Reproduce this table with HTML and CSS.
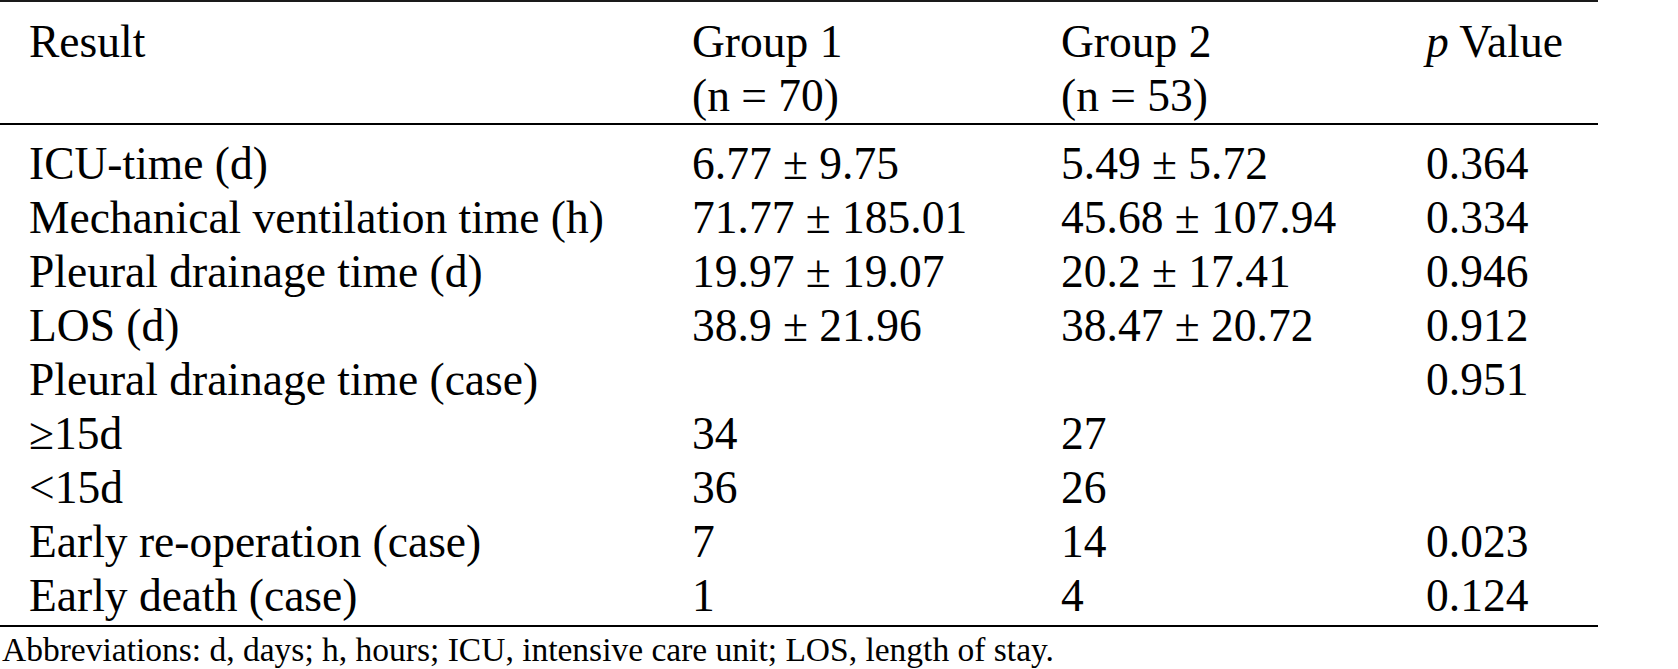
FILE: index.html
```html
<!DOCTYPE html>
<html lang="en">
<head>
<meta charset="utf-8">
<title>Results</title>
<link rel="stylesheet" href="styles.css">
</head>
<body>
<div class="wrap">
  <div class="table">
    <div class="row head">
      <div class="cell">Result</div>
      <div class="cell">Group 1<br>(n = 70)</div>
      <div class="cell">Group 2<br>(n = 53)</div>
      <div class="cell"><i>p</i> Value</div>
    </div>
    <div class="body">
      <div class="row"><div class="cell">ICU-time (d)</div><div class="cell">6.77 ± 9.75</div><div class="cell">5.49 ± 5.72</div><div class="cell">0.364</div></div>
      <div class="row"><div class="cell">Mechanical ventilation time (h)</div><div class="cell">71.77 ± 185.01</div><div class="cell">45.68 ± 107.94</div><div class="cell">0.334</div></div>
      <div class="row"><div class="cell">Pleural drainage time (d)</div><div class="cell">19.97 ± 19.07</div><div class="cell">20.2 ± 17.41</div><div class="cell">0.946</div></div>
      <div class="row"><div class="cell">LOS (d)</div><div class="cell">38.9 ± 21.96</div><div class="cell">38.47 ± 20.72</div><div class="cell">0.912</div></div>
      <div class="row"><div class="cell">Pleural drainage time (case)</div><div class="cell"></div><div class="cell"></div><div class="cell">0.951</div></div>
      <div class="row"><div class="cell"><span class="ge">≥</span>15d</div><div class="cell">34</div><div class="cell">27</div><div class="cell"></div></div>
      <div class="row"><div class="cell">&lt;15d</div><div class="cell">36</div><div class="cell">26</div><div class="cell"></div></div>
      <div class="row"><div class="cell">Early re-operation (case)</div><div class="cell">7</div><div class="cell">14</div><div class="cell">0.023</div></div>
      <div class="row"><div class="cell">Early death (case)</div><div class="cell">1</div><div class="cell">4</div><div class="cell">0.124</div></div>
    </div>
  </div>
  <p class="note">Abbreviations: d, days; h, hours; ICU, intensive care unit; LOS, length of stay.</p>
</div>
</body>
</html>
```

FILE: styles.css
```css
html, body {
  margin: 0;
  padding: 0;
  background: #ffffff;
}
body {
  font-family: "Liberation Serif", "Times New Roman", serif;
  color: #000000;
}
.wrap {
  width: 1598px;
}
.table {
  border-top: 2px solid #1a1a1a;
  border-bottom: 2px solid #000000;
  font-size: 45.5px;
  line-height: 54px;
}
.row {
  display: grid;
  grid-template-columns: 663px 369px 365px 1fr;
  padding-left: 29px;
}
.head {
  padding-top: 13px;
  border-bottom: 2px solid #000000;
}
.body {
  padding-top: 12px;
  padding-bottom: 2px;
}
.cell {
  white-space: nowrap;
}
.note {
  margin: 0;
  padding-left: 2px;
  padding-top: 4px;
  font-size: 33.5px;
  line-height: 38px;
}
```
